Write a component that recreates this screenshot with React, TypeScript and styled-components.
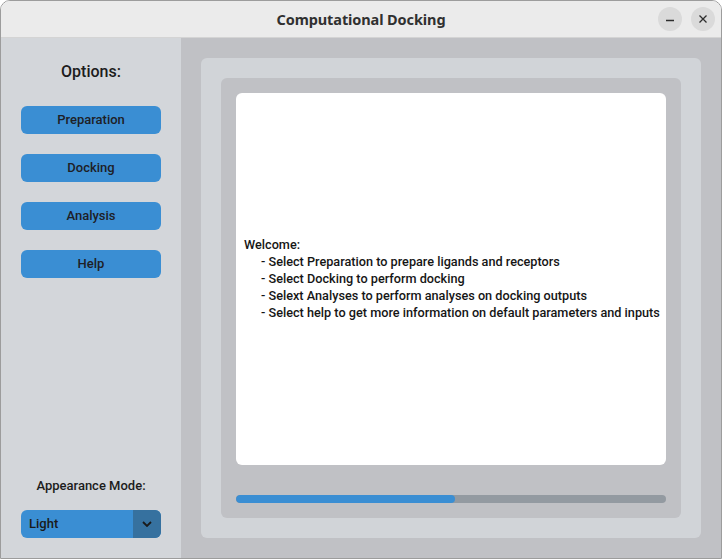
import * as React from 'react';
import styled, { createGlobalStyle } from 'styled-components';

const GlobalStyle = createGlobalStyle`
  html, body {
    margin: 0;
    padding: 0;
    background: #ffffff;
  }
  * {
    box-sizing: border-box;
  }
`;

const Window = styled.div`
  width: 722px;
  height: 559px;
  border: 1px solid #9c9c9c;
  border-radius: 10px 10px 0 0;
  overflow: hidden;
  display: flex;
  flex-direction: column;
  font-family: Roboto, 'Liberation Sans', sans-serif;
`;

const TitleBar = styled.div`
  height: 37px;
  flex: none;
  background: #ebebeb;
  border-bottom: 1px solid #d4d4d4;
  display: flex;
  align-items: center;
  justify-content: center;
  position: relative;
`;

const Title = styled.div`
  font-family: 'Noto Sans', 'DejaVu Sans', sans-serif;
  font-weight: 700;
  font-size: 14.5px;
  color: #303030;
  letter-spacing: -0.1px;
`;

const Controls = styled.div`
  position: absolute;
  right: 6px;
  top: 6px;
  display: flex;
  gap: 9px;
`;

const ControlButton = styled.div`
  width: 24px;
  height: 24px;
  border-radius: 50%;
  background: #dadada;
  display: flex;
  align-items: center;
  justify-content: center;
  color: #2e2e2e;
`;

const Body = styled.div`
  flex: 1;
  display: flex;
  min-height: 0;
`;

const Sidebar = styled.div`
  width: 180px;
  flex: none;
  background: #d3d6da;
  display: flex;
  flex-direction: column;
  align-items: center;
  padding: 21px 20px 20px;
`;

const SidebarTitle = styled.div`
  font-size: 16px;
  font-weight: 500;
  color: #1c1c1c;
  line-height: 26px;
  margin-bottom: 21px;
`;

const ButtonList = styled.div`
  display: flex;
  flex-direction: column;
  gap: 20px;
  width: 140px;
`;

const NavButton = styled.button`
  height: 28px;
  width: 140px;
  border: none;
  border-radius: 6px;
  background: #3a8ed3;
  color: #1e2026;
  font-family: Roboto, 'Liberation Sans', sans-serif;
  font-size: 13px;
  font-weight: 500;
  line-height: 28px;
  padding: 0;
`;

const Spacer = styled.div`
  flex: 1;
`;

const ModeLabel = styled.div`
  font-size: 13px;
  font-weight: 500;
  color: #1c1c1c;
  line-height: 18px;
  margin-bottom: 15px;
`;

const Dropdown = styled.div`
  width: 140px;
  height: 28px;
  border-radius: 6px;
  overflow: hidden;
  display: flex;
  background: #3a8ed3;
`;

const DropdownValue = styled.div`
  flex: 1;
  padding: 0 0 1px 8px;
  display: flex;
  align-items: center;
  font-size: 13px;
  font-weight: 500;
  color: #1a1a1a;
`;

const DropdownArrow = styled.div`
  width: 28px;
  background: #36719f;
  display: flex;
  align-items: center;
  justify-content: center;
  color: #1a1a1a;
`;

const Main = styled.div`
  flex: 1;
  min-width: 0;
  background: #c0c1c5;
  padding: 20px;
  display: flex;
`;

const OuterFrame = styled.div`
  flex: 1;
  min-width: 0;
  background: #d1d4d8;
  border-radius: 6px;
  padding: 20px;
  display: flex;
`;

const InnerFrame = styled.div`
  flex: 1;
  min-width: 0;
  background: #c0c1c5;
  border-radius: 6px;
  padding: 15px 15px 15px;
  display: flex;
  flex-direction: column;
`;

const TextBox = styled.div`
  flex: 1;
  min-width: 0;
  overflow: hidden;
  background: #ffffff;
  border-radius: 6px;
  display: flex;
  flex-direction: column;
  justify-content: center;
  padding: 0 8px 2px;
  font-size: 12.7px;
  font-weight: 500;
  color: #161616;
  line-height: 17px;
`;

const Line = styled.div<{ $indent?: boolean }>`
  white-space: pre;
  padding-left: ${(p) => (p.$indent ? '17px' : '0')};
`;

const Progress = styled.div`
  height: 8px;
  flex: none;
  margin-top: 30px;
  background: #939aa1;
  border-radius: 4px;
  overflow: hidden;
`;

const ProgressFill = styled.div`
  height: 100%;
  background: #3a8ed3;
  border-radius: 4px;
`;

const lines = [
  '- Select Preparation to prepare ligands and receptors',
  '- Select Docking to perform docking',
  '- Selext Analyses to perform analyses on docking outputs',
  '- Select help to get more information on default parameters and inputs',
];

export default function App() {
  const progress = 0.509;

  return (
    <>
      <GlobalStyle />
      <Window>
        <TitleBar>
          <Title>Computational Docking</Title>
          <Controls>
            <ControlButton>
              <svg width="10" height="10" viewBox="0 0 10 10">
                <line x1="1" y1="6.5" x2="9" y2="6.5" stroke="currentColor" strokeWidth="1.3" />
              </svg>
            </ControlButton>
            <ControlButton>
              <svg width="10" height="10" viewBox="0 0 10 10">
                <path d="M1.5 1.5 L8.5 8.5 M8.5 1.5 L1.5 8.5" stroke="currentColor" strokeWidth="1.3" />
              </svg>
            </ControlButton>
          </Controls>
        </TitleBar>
        <Body>
          <Sidebar>
            <SidebarTitle>Options:</SidebarTitle>
            <ButtonList>
              <NavButton>Preparation</NavButton>
              <NavButton>Docking</NavButton>
              <NavButton>Analysis</NavButton>
              <NavButton>Help</NavButton>
            </ButtonList>
            <Spacer />
            <ModeLabel>Appearance Mode:</ModeLabel>
            <Dropdown>
              <DropdownValue>Light</DropdownValue>
              <DropdownArrow>
                <svg width="10" height="6" viewBox="0 0 10 6">
                  <path d="M1 1 L5 5 L9 1" fill="none" stroke="currentColor" strokeWidth="1.8" />
                </svg>
              </DropdownArrow>
            </Dropdown>
          </Sidebar>
          <Main>
            <OuterFrame>
              <InnerFrame>
                <TextBox>
                  <Line>Welcome:</Line>
                  {lines.map((l) => (
                    <Line key={l} $indent>
                      {l}
                    </Line>
                  ))}
                </TextBox>
                <Progress>
                  <ProgressFill style={{ width: `${progress * 100}%` }} />
                </Progress>
              </InnerFrame>
            </OuterFrame>
          </Main>
        </Body>
      </Window>
    </>
  );
}
